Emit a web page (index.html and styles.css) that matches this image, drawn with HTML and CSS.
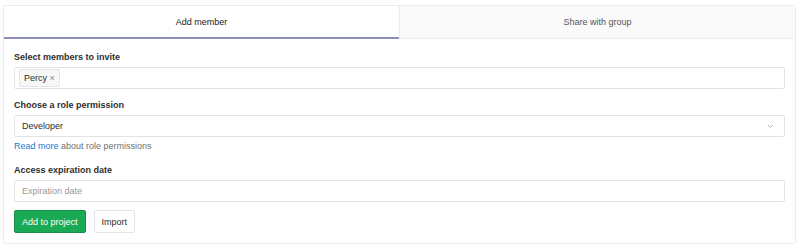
FILE: index.html
```html
<!doctype html>
<html lang="en">

<head>
    <meta charset="UTF-8">
    <title>Project members</title>
    <link rel="stylesheet" href="styles.css">
</head>

<body>
    <div class="members-panel">
        <ul class="tabs">
            <li class="tab active">Add member</li>
            <li class="tab">Share with group</li>
        </ul>

        <form class="invite-form">
            <div class="form-group">
                <label class="label">Select members to invite</label>
                <div class="input token-input">
                    <span class="token">Percy <span class="token-close">&times;</span></span>
                </div>
            </div>

            <div class="form-group">
                <label class="label">Choose a role permission</label>
                <div class="input select">
                    <span>Developer</span>
                    <svg class="caret" width="7" height="5" viewBox="0 0 7 5">
                        <path d="M1 1l2.5 2.5L6 1" fill="none" stroke="#b5b5b5" stroke-width="1"/>
                    </svg>
                </div>
                <p class="help"><a href="#">Read more</a> about role permissions</p>
            </div>

            <div class="form-group last">
                <label class="label">Access expiration date</label>
                <div class="input placeholder">Expiration date</div>
            </div>

            <div class="actions">
                <button type="button" class="btn btn-create">Add to project</button>
                <button type="button" class="btn">Import</button>
            </div>
        </form>
    </div>
</body>

</html>
```

FILE: styles.css
```css
*,
*:after,
*:before {
    box-sizing: border-box;
    padding: 0;
    margin: 0;
}

body {
    font-family: "Liberation Sans", Arial, sans-serif;
    font-size: 9px;
    color: #2e2e2e;
    background: #fff;
    padding: 5px 4px 0 3px;
}

ul {
    list-style: none;
}

.members-panel {
    border: 1px solid #ececec;
    border-radius: 2px;
}

.tabs {
    display: flex;
    height: 33px;
    background: #fafafa;
    border-bottom: 1px solid #ececec;
}

.tab {
    flex: 1;
    display: flex;
    align-items: center;
    justify-content: center;
    color: #555;
}

.tab + .tab {
    border-left: 1px solid #ececec;
}

.tab.active {
    background: #fff;
    color: #222;
    border-bottom: 2px solid #8e8fb6;
    margin-bottom: -1px;
}

.invite-form {
    padding: 12px 10px 10px 10px;
}

.form-group {
    margin-bottom: 10px;
}

.form-group.last {
    margin-bottom: 8px;
}

.label {
    display: block;
    font-weight: bold;
    line-height: 12px;
    margin-bottom: 4px;
}

.input {
    height: 22px;
    border: 1px solid #e3e3e3;
    border-radius: 2px;
    display: flex;
    align-items: center;
    padding: 0 7px;
}

.token-input {
    padding: 0 4px;
}

.token {
    background: #f7f7f7;
    border: 1px solid #e6e6e6;
    border-radius: 2px;
    padding: 3px 4px;
    line-height: 10px;
}

.token-close {
    color: #888;
}

.select {
    justify-content: space-between;
}

.caret {
    margin-right: 3px;
}

.placeholder {
    color: #9a9a9a;
}

.help {
    color: #707070;
    margin-top: 4px;
    margin-bottom: 12px;
    line-height: 11px;
}

.help a {
    color: #1f78d1;
    text-decoration: none;
}

.actions {
    display: flex;
    gap: 8px;
}

.btn {
    font: 9px "Liberation Sans", Arial, sans-serif;
    height: 23px;
    padding: 0 7px;
    border: 1px solid #e5e5e5;
    border-radius: 2px;
    background: #fff;
    color: #2e2e2e;
}

.btn-create {
    background: #1aaa55;
    border-color: #168f48;
    color: #fff;
}
```
